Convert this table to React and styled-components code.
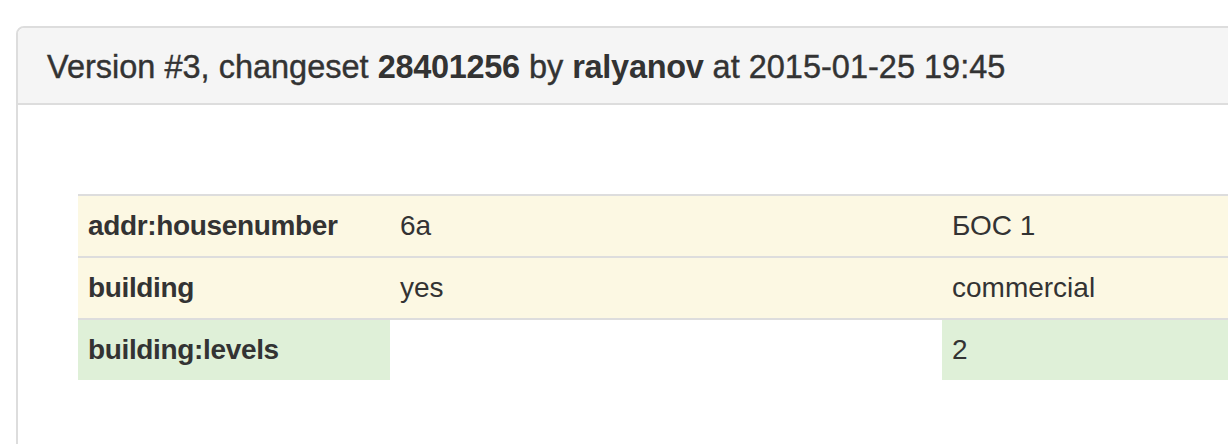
import React from "react";
import styled, { createGlobalStyle } from "styled-components";

const Global = createGlobalStyle`
  html, body {
    margin: 0;
    padding: 0;
    background: #ffffff;
    overflow: hidden;
  }
  body {
    font-family: "Liberation Sans", Helvetica, Arial, sans-serif;
    color: #333333;
  }
`;

const Page = styled.div`
  width: 1228px;
  height: 444px;
  overflow: hidden;
  padding: 26px 0 0 16px;
  box-sizing: border-box;
`;

const Panel = styled.section`
  width: 1440px;
  height: 460px;
  border: 2px solid #dddddd;
  border-radius: 8px;
  background: #ffffff;
  box-sizing: border-box;
`;

const Heading = styled.header`
  background: #f5f5f5;
  border-bottom: 2px solid #dddddd;
  border-radius: 6px 6px 0 0;
  padding: 21px 30px 17px 29px;
`;

const Title = styled.h3`
  margin: 0;
  font-size: 32.5px;
  line-height: 37px;
  font-weight: 400;
  -webkit-text-stroke: 0.4px #333333;
  color: #333333;
`;

const Strong = styled.b`
  font-weight: 700;
  -webkit-text-stroke: 0;
  letter-spacing: -0.3px;
`;

const Body = styled.div`
  padding: 89px 0 0 60px;
`;

const Table = styled.table`
  width: 1300px;
  table-layout: fixed;
  border-collapse: collapse;
  border-spacing: 0;
  font-size: 28px;
  line-height: 40px;
  color: #333333;
`;

const Row = styled.tr``;

const bgFor = (tone) =>
  tone === "warning" ? "#fcf8e3" : tone === "success" ? "#dff0d8" : "transparent";

const Cell = styled.td`
  width: ${(p) => p.$w}px;
  padding: 10px 10px;
  border-top: 2px solid #dddddd;
  background: ${(p) => bgFor(p.$tone)};
  font-weight: ${(p) => (p.$key ? 700 : 400)};
  letter-spacing: ${(p) => (p.$key ? "-0.35px" : "0")};
  vertical-align: top;
  box-sizing: border-box;
  white-space: nowrap;
`;

const rows = [
  { key: "addr:housenumber", old: "6а", cur: "БОС 1", tones: ["warning", "warning", "warning"] },
  { key: "building", old: "yes", cur: "commercial", tones: ["warning", "warning", "warning"] },
  { key: "building:levels", old: "", cur: "2", tones: ["success", "none", "success"] },
];

export default function App() {
  return (
    <>
      <Global />
      <Page>
        <Panel>
          <Heading>
            <Title>
              Version #3, changeset <Strong>28401256</Strong> by <Strong>ralyanov</Strong> at
              2015-01-25 19:45
            </Title>
          </Heading>
          <Body>
            <Table>
              <tbody>
                {rows.map((r) => (
                  <Row key={r.key}>
                    <Cell $w={312} $key $tone={r.tones[0]}>
                      {r.key}
                    </Cell>
                    <Cell $w={552} $tone={r.tones[1]}>
                      {r.old}
                    </Cell>
                    <Cell $w={436} $tone={r.tones[2]}>
                      {r.cur}
                    </Cell>
                  </Row>
                ))}
              </tbody>
            </Table>
          </Body>
        </Panel>
      </Page>
    </>
  );
}
